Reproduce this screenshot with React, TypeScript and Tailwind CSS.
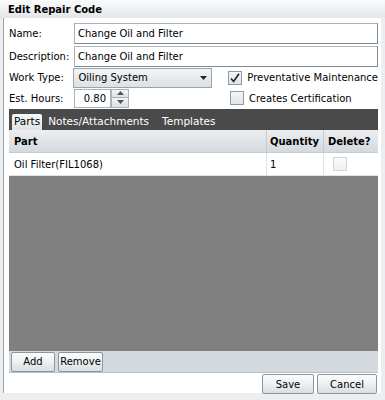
import React from "react";

const font = { fontFamily: '"DejaVu Sans", Verdana, sans-serif' };

function Check({ checked }: { checked?: boolean }) {
  return (
    <div className="w-[14px] h-[14px] shrink-0 border border-[#8f9aa3] bg-gradient-to-b from-[#f4f6f7] to-[#dfe4e8] flex items-center justify-center">
      {checked && (
        <svg width="12" height="12" viewBox="0 0 12 12">
          <path d="M2 6.5 L4.6 9.5 L10 1.8" stroke="#222" strokeWidth="1.6" fill="none" />
        </svg>
      )}
    </div>
  );
}

function Btn({ children, w }: { children: React.ReactNode; w: string }) {
  return (
    <div
      className={`${w} h-[20px] rounded-[2px] border border-[#8c969e] bg-gradient-to-b from-[#fbfcfc] via-[#eef0f2] to-[#d9dee2] flex items-center justify-center text-[10px] text-black`}
    >
      {children}
    </div>
  );
}

export default function App() {
  return (
    <div className="w-[385px] h-[400px] bg-[#eceef0] relative overflow-hidden text-[10px] text-black" style={font}>
      <div className="h-[18px] bg-gradient-to-b from-[#fafbfb] to-[#e3e6e9] flex items-center pl-[8px] font-bold text-[10px]">
        Edit Repair Code
      </div>
      <div className="ml-[3px] mr-[4px] h-[375px] bg-white border-l border-[#9aa3aa] flex flex-col">
        <div className="pl-[5px] pr-[3px] pt-[5px] flex flex-col">
          <div className="flex h-[22px] items-start">
            <div className="w-[65px] pt-[3px]">Name:</div>
            <div className="flex-1 h-[21px] border border-[#a9b3ba] border-r-[#7d8b96] border-b-[#7d8b96] flex items-center pl-[3px]">
              Change Oil and Filter
            </div>
          </div>
          <div className="flex h-[22px] items-center">
            <div className="w-[65px]">Description:</div>
            <div className="flex-1 h-[21px] border border-[#a9b3ba] border-r-[#7d8b96] border-b-[#7d8b96] flex items-center pl-[3px]">
              Change Oil and Filter
            </div>
          </div>
          <div className="flex h-[21px] items-center">
            <div className="w-[65px]">Work Type:</div>
            <div className="w-[140px] h-[20px] border border-[#9aa4ac] bg-gradient-to-b from-[#f3f4f5] to-[#dde1e4] flex items-center pl-[4px] justify-between pr-[4px]">
              <span>Oiling System</span>
              <svg width="7" height="4" viewBox="0 0 7 4">
                <path d="M0 0 L7 0 L3.5 4 Z" fill="#222" />
              </svg>
            </div>
            <div className="ml-[16px] flex items-center gap-[5px] whitespace-nowrap">
              <Check checked />
              <span>Preventative Maintenance</span>
            </div>
          </div>
          <div className="flex h-[20px] items-center">
            <div className="w-[65px]">Est. Hours:</div>
            <div className="w-[37px] h-[19px] border border-[#a9b3ba] flex items-center justify-end pr-[4px]">0.80</div>
            <div className="w-[18px] h-[19px] flex flex-col">
              <div className="h-[9.5px] border border-[#a9b3ba] bg-gradient-to-b from-[#f3f4f5] to-[#dde1e4] flex items-center justify-center">
                <svg width="7" height="4" viewBox="0 0 7 4"><path d="M0 4 L7 4 L3.5 0 Z" fill="#555" /></svg>
              </div>
              <div className="h-[9.5px] border border-t-0 border-[#a9b3ba] bg-gradient-to-b from-[#f3f4f5] to-[#dde1e4] flex items-center justify-center">
                <svg width="7" height="4" viewBox="0 0 7 4"><path d="M0 0 L7 0 L3.5 4 Z" fill="#555" /></svg>
              </div>
            </div>
            <div className="ml-[101px] flex items-center gap-[5px] whitespace-nowrap">
              <Check />
              <span>Creates Certification</span>
            </div>
          </div>
        </div>
        <div className="mx-[5px] mt-[1px] w-[369px] flex flex-col">
          <div className="h-[21px] bg-[#4a4a4a] flex items-end pl-[3px] text-white text-[10.5px] whitespace-nowrap">
            <div className="h-[16px] px-[2px] rounded-t-[2px] bg-gradient-to-b from-[#f7f8f9] to-[#dfe3e6] text-black flex items-center">Parts</div>
            <div className="h-[16px] ml-[6px] flex items-center">Notes/Attachments</div>
            <div className="h-[16px] ml-[13px] flex items-center">Templates</div>
          </div>
          <div className="flex h-[23px] bg-gradient-to-b from-[#eceef0] to-[#d4d9dd] font-bold border-b border-[#c5cbd0]">
            <div className="w-[257px] pl-[5px] flex items-center">Part</div>
            <div className="w-[57px] pl-[3px] flex items-center border-l border-[#c5cbd0]">Quantity</div>
            <div className="flex-1 pl-[4px] flex items-center border-l border-[#c5cbd0]">Delete?</div>
          </div>
          <div className="flex h-[23px] bg-white border-b border-[#dfe3e6]">
            <div className="w-[257px] pl-[5px] flex items-center">Oil Filter(FIL1068)</div>
            <div className="w-[57px] pl-[3px] flex items-center border-l border-[#dfe3e6]">1</div>
            <div className="flex-1 pl-[9px] flex items-center border-l border-[#dfe3e6]">
              <div className="w-[14px] h-[14px] border border-[#d0d6da] bg-gradient-to-b from-[#fbfcfc] to-[#eef0f2]" />
            </div>
          </div>
          <div className="h-[175px] bg-[#808080]" />
          <div className="h-[22px] bg-[#d4d9dd] flex items-center pl-[2px] gap-[3px] border-b border-[#b9c0c6]">
            <Btn w="w-[44px]">Add</Btn>
            <Btn w="w-[45px]">Remove</Btn>
          </div>
        </div>
        <div className="flex justify-end gap-[3px] pr-[4px] mt-[1px]">
          <Btn w="w-[52px]">Save</Btn>
          <Btn w="w-[60px]">Cancel</Btn>
        </div>
      </div>
    </div>
  );
}
